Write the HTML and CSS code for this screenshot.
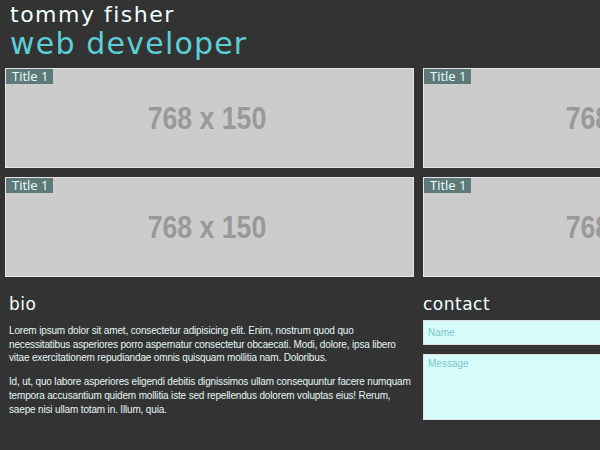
FILE: index.html
```html
<!DOCTYPE html>
<html>
<head>
<meta charset="utf-8">
<link rel="stylesheet" href="styles.css">
</head>
<body>
<header class="masthead">
  <div class="name">tommy fisher</div>
  <div class="role">web developer</div>
</header>
<main class="grid">
  <div class="card"><span class="tag">Title 1</span><span class="ph">768 x 150</span></div>
  <div class="card"><span class="tag">Title 1</span><span class="ph">768 x 150</span></div>
  <div class="card"><span class="tag">Title 1</span><span class="ph">768 x 150</span></div>
  <div class="card"><span class="tag">Title 1</span><span class="ph">768 x 150</span></div>
  <section class="bio">
    <h2>bio</h2>
    <p>Lorem ipsum dolor sit amet, consectetur adipisicing elit. Enim, nostrum quod quo necessitatibus asperiores porro aspernatur consectetur obcaecati. Modi, dolore, ipsa libero vitae exercitationem repudiandae omnis quisquam mollitia nam. Doloribus.</p>
    <p>Id, ut, quo labore asperiores eligendi debitis dignissimos ullam consequuntur facere numquam tempora accusantium quidem mollitia iste sed repellendus dolorem voluptas eius! Rerum, saepe nisi ullam totam in. Illum, quia.</p>
  </section>
  <section class="contact">
    <h2>contact</h2>
    <input class="field" type="text" placeholder="Name">
    <textarea class="field area" placeholder="Message"></textarea>
  </section>
</main>
</body>
</html>
```
FILE: styles.css
```css
html, body {
  margin: 0;
  background: #333333;
  overflow: hidden;
}
body {
  width: 600px;
  height: 450px;
}
.masthead {
  padding: 2px 0 0 10px;
  height: 68px;
  box-sizing: border-box;
  font-family: "DejaVu Sans", "Open Sans", sans-serif;
}
.name {
  color: #f2ffff;
  font-size: 22px;
  line-height: 25px;
  letter-spacing: 1.5px;
}
.role {
  color: #5ccfd6;
  font-size: 30px;
  line-height: 33px;
  letter-spacing: 1.2px;
}
.grid {
  display: grid;
  grid-template-columns: 409px 409px;
  column-gap: 9px;
  row-gap: 9px;
  padding-left: 5px;
  width: max-content;
}
.card {
  position: relative;
  height: 100px;
  box-sizing: border-box;
  background: #cccccc;
  border: 1px solid #e4e4e4;
  display: flex;
  align-items: center;
  justify-content: center;
}
.tag {
  position: absolute;
  left: 0;
  top: 0;
  background: #5f7979;
  color: #e8ffff;
  font-family: "Open Sans", "DejaVu Sans", sans-serif;
  font-size: 13px;
  line-height: 15px;
  padding: 0 5px 0 6px;
}
.ph {
  display: inline-block;
  font-family: "Liberation Sans", Arial, sans-serif;
  font-weight: bold;
  font-size: 31px;
  color: #999999;
  transform: scaleX(0.86);
  margin-right: 6px;
  margin-top: 2px;
}
.bio, .contact {
  margin-top: 7px;
}
.bio {
  padding-left: 4px;
  padding-right: 0;
}
h2 {
  margin: 0 0 9px 0;
  font-family: "DejaVu Sans", "Open Sans", sans-serif;
  font-weight: normal;
  font-size: 17px;
  line-height: 22px;
  color: #f2ffff;
  letter-spacing: 0.5px;
}
.bio p {
  margin: 0 0 10px 0;
  font-family: "Liberation Sans", Arial, sans-serif;
  font-size: 10px;
  letter-spacing: -0.16px;
  line-height: 13.7px;
  color: #e6f6f6;
}
.contact {
  display: flex;
  flex-direction: column;
}
.contact h2 {
  margin-bottom: 5px;
}
.field {
  display: block;
  box-sizing: border-box;
  width: 200px;
  height: 25px;
  margin: 0 0 9px 0;
  padding: 3px 4px;
  background: #d6fcfc;
  border: 1px solid #e0e0e0;
  font-family: "Liberation Sans", Arial, sans-serif;
  font-size: 10px;
  color: #333;
  outline: none;
}
.field::placeholder {
  color: #7cc6cc;
}
.area {
  height: 66px;
  resize: none;
}
```
